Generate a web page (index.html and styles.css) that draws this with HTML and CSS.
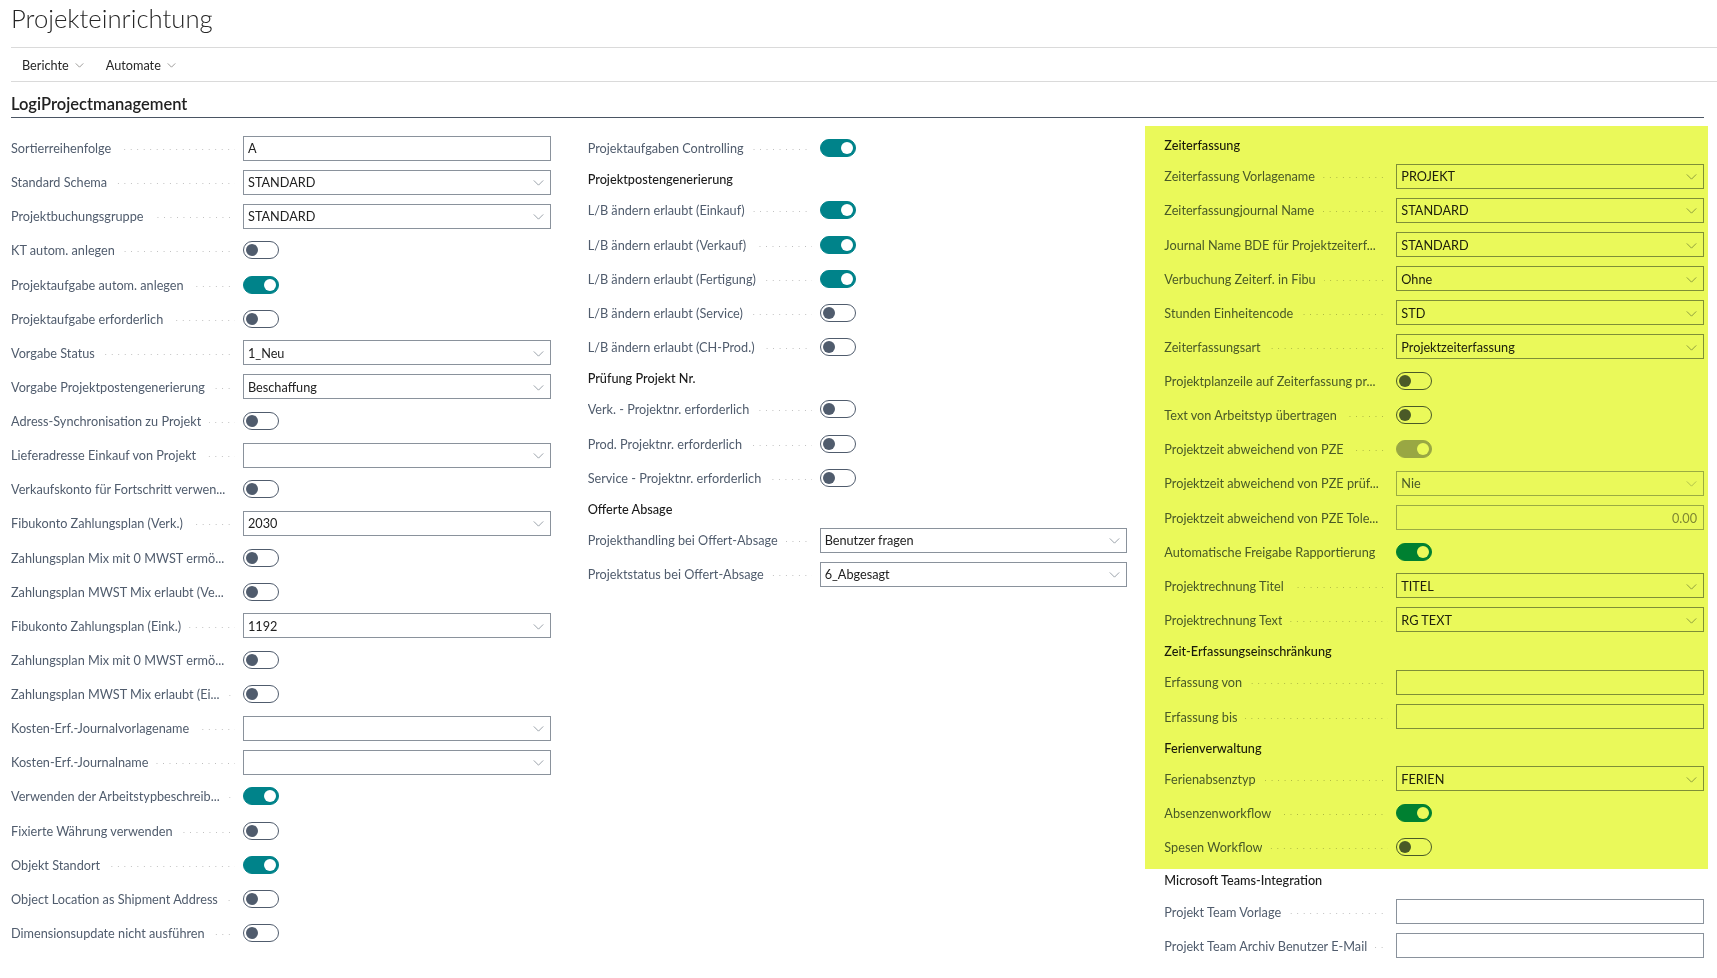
FILE: index.html
```html
<!DOCTYPE html>
<html lang="de">
<head>
    <meta charset="UTF-8">
    <title>Projekteinrichtung</title>
    <link rel="stylesheet" href="styles.css">
</head>
<body>
    <header class="page-head">
        <h1 class="page-title">Projekteinrichtung</h1>
    </header>

    <nav class="action-bar">
        <span class="menu">Berichte <svg class="menu-chev" viewBox="0 0 10 6"><path d="M0.5 0.5 L5 5 L9.5 0.5"/></svg></span>
        <span class="menu">Automate <svg class="menu-chev" viewBox="0 0 10 6"><path d="M0.5 0.5 L5 5 L9.5 0.5"/></svg></span>
    </nav>

    <section class="fasttab">
        <h2 class="fasttab-title">LogiProjectmanagement</h2>

        <div class="columns">
            <!-- Spalte 1 -->
            <div class="col">
                <div class="field"><div class="cap"><span class="caption">Sortierreihenfolge</span><span class="leader"></span></div><div class="val"><div class="input"><span class="text">A</span></div></div></div>
                <div class="field"><div class="cap"><span class="caption">Standard Schema</span><span class="leader"></span></div><div class="val"><div class="input select"><span class="text">STANDARD</span><svg class="chev" viewBox="0 0 12 7"><path d="M0.5 0.5 L6 6 L11.5 0.5"/></svg></div></div></div>
                <div class="field"><div class="cap"><span class="caption">Projektbuchungsgruppe</span><span class="leader"></span></div><div class="val"><div class="input select"><span class="text">STANDARD</span><svg class="chev" viewBox="0 0 12 7"><path d="M0.5 0.5 L6 6 L11.5 0.5"/></svg></div></div></div>
                <div class="field"><div class="cap"><span class="caption">KT autom. anlegen</span><span class="leader"></span></div><div class="val"><span class="toggle"></span></div></div>
                <div class="field"><div class="cap"><span class="caption">Projektaufgabe autom. anlegen</span><span class="leader"></span></div><div class="val"><span class="toggle on"></span></div></div>
                <div class="field"><div class="cap"><span class="caption">Projektaufgabe erforderlich</span><span class="leader"></span></div><div class="val"><span class="toggle"></span></div></div>
                <div class="field"><div class="cap"><span class="caption">Vorgabe Status</span><span class="leader"></span></div><div class="val"><div class="input select"><span class="text">1_Neu</span><svg class="chev" viewBox="0 0 12 7"><path d="M0.5 0.5 L6 6 L11.5 0.5"/></svg></div></div></div>
                <div class="field"><div class="cap"><span class="caption">Vorgabe Projektpostengenerierung</span><span class="leader"></span></div><div class="val"><div class="input select"><span class="text">Beschaffung</span><svg class="chev" viewBox="0 0 12 7"><path d="M0.5 0.5 L6 6 L11.5 0.5"/></svg></div></div></div>
                <div class="field"><div class="cap"><span class="caption">Adress-Synchronisation zu Projekt</span><span class="leader"></span></div><div class="val"><span class="toggle"></span></div></div>
                <div class="field"><div class="cap"><span class="caption">Lieferadresse Einkauf von Projekt</span><span class="leader"></span></div><div class="val"><div class="input select"><span class="text"></span><svg class="chev" viewBox="0 0 12 7"><path d="M0.5 0.5 L6 6 L11.5 0.5"/></svg></div></div></div>
                <div class="field"><div class="cap"><span class="caption">Verkaufskonto für Fortschritt verwen...</span><span class="leader"></span></div><div class="val"><span class="toggle"></span></div></div>
                <div class="field"><div class="cap"><span class="caption">Fibukonto Zahlungsplan (Verk.)</span><span class="leader"></span></div><div class="val"><div class="input select"><span class="text">2030</span><svg class="chev" viewBox="0 0 12 7"><path d="M0.5 0.5 L6 6 L11.5 0.5"/></svg></div></div></div>
                <div class="field"><div class="cap"><span class="caption">Zahlungsplan Mix mit 0 MWST ermö...</span><span class="leader"></span></div><div class="val"><span class="toggle"></span></div></div>
                <div class="field"><div class="cap"><span class="caption">Zahlungsplan MWST Mix erlaubt (Ve...</span><span class="leader"></span></div><div class="val"><span class="toggle"></span></div></div>
                <div class="field"><div class="cap"><span class="caption">Fibukonto Zahlungsplan (Eink.)</span><span class="leader"></span></div><div class="val"><div class="input select"><span class="text">1192</span><svg class="chev" viewBox="0 0 12 7"><path d="M0.5 0.5 L6 6 L11.5 0.5"/></svg></div></div></div>
                <div class="field"><div class="cap"><span class="caption">Zahlungsplan Mix mit 0 MWST ermö...</span><span class="leader"></span></div><div class="val"><span class="toggle"></span></div></div>
                <div class="field"><div class="cap"><span class="caption">Zahlungsplan MWST Mix erlaubt (Ei...</span><span class="leader"></span></div><div class="val"><span class="toggle"></span></div></div>
                <div class="field"><div class="cap"><span class="caption">Kosten-Erf.-Journalvorlagename</span><span class="leader"></span></div><div class="val"><div class="input select"><span class="text"></span><svg class="chev" viewBox="0 0 12 7"><path d="M0.5 0.5 L6 6 L11.5 0.5"/></svg></div></div></div>
                <div class="field"><div class="cap"><span class="caption">Kosten-Erf.-Journalname</span><span class="leader"></span></div><div class="val"><div class="input select"><span class="text"></span><svg class="chev" viewBox="0 0 12 7"><path d="M0.5 0.5 L6 6 L11.5 0.5"/></svg></div></div></div>
                <div class="field"><div class="cap"><span class="caption">Verwenden der Arbeitstypbeschreib...</span><span class="leader"></span></div><div class="val"><span class="toggle on"></span></div></div>
                <div class="field"><div class="cap"><span class="caption">Fixierte Währung verwenden</span><span class="leader"></span></div><div class="val"><span class="toggle"></span></div></div>
                <div class="field"><div class="cap"><span class="caption">Objekt Standort</span><span class="leader"></span></div><div class="val"><span class="toggle on"></span></div></div>
                <div class="field"><div class="cap"><span class="caption">Object Location as Shipment Address</span><span class="leader"></span></div><div class="val"><span class="toggle"></span></div></div>
                <div class="field"><div class="cap"><span class="caption">Dimensionsupdate nicht ausführen</span><span class="leader"></span></div><div class="val"><span class="toggle"></span></div></div>
            </div>

            <!-- Spalte 2 -->
            <div class="col">
                <div class="field"><div class="cap"><span class="caption">Projektaufgaben Controlling</span><span class="leader"></span></div><div class="val"><span class="toggle on"></span></div></div>
                <div class="group-caption">Projektpostengenerierung</div>
                <div class="field"><div class="cap"><span class="caption">L/B ändern erlaubt (Einkauf)</span><span class="leader"></span></div><div class="val"><span class="toggle on"></span></div></div>
                <div class="field"><div class="cap"><span class="caption">L/B ändern erlaubt (Verkauf)</span><span class="leader"></span></div><div class="val"><span class="toggle on"></span></div></div>
                <div class="field"><div class="cap"><span class="caption">L/B ändern erlaubt (Fertigung)</span><span class="leader"></span></div><div class="val"><span class="toggle on"></span></div></div>
                <div class="field"><div class="cap"><span class="caption">L/B ändern erlaubt (Service)</span><span class="leader"></span></div><div class="val"><span class="toggle"></span></div></div>
                <div class="field"><div class="cap"><span class="caption">L/B ändern erlaubt (CH-Prod.)</span><span class="leader"></span></div><div class="val"><span class="toggle"></span></div></div>
                <div class="group-caption">Prüfung Projekt Nr.</div>
                <div class="field"><div class="cap"><span class="caption">Verk. - Projektnr. erforderlich</span><span class="leader"></span></div><div class="val"><span class="toggle"></span></div></div>
                <div class="field"><div class="cap"><span class="caption">Prod. Projektnr. erforderlich</span><span class="leader"></span></div><div class="val"><span class="toggle"></span></div></div>
                <div class="field"><div class="cap"><span class="caption">Service - Projektnr. erforderlich</span><span class="leader"></span></div><div class="val"><span class="toggle"></span></div></div>
                <div class="group-caption">Offerte Absage</div>
                <div class="field"><div class="cap"><span class="caption">Projekthandling bei Offert-Absage</span><span class="leader"></span></div><div class="val"><div class="input select"><span class="text">Benutzer fragen</span><svg class="chev" viewBox="0 0 12 7"><path d="M0.5 0.5 L6 6 L11.5 0.5"/></svg></div></div></div>
                <div class="field"><div class="cap"><span class="caption">Projektstatus bei Offert-Absage</span><span class="leader"></span></div><div class="val"><div class="input select"><span class="text">6_Abgesagt</span><svg class="chev" viewBox="0 0 12 7"><path d="M0.5 0.5 L6 6 L11.5 0.5"/></svg></div></div></div>
            </div>

            <!-- Spalte 3 -->
            <div class="col">
                <div class="highlight">
                    <div class="group-caption">Zeiterfassung</div>
                    <div class="field"><div class="cap"><span class="caption">Zeiterfassung Vorlagename</span><span class="leader"></span></div><div class="val"><div class="input select"><span class="text">PROJEKT</span><svg class="chev" viewBox="0 0 12 7"><path d="M0.5 0.5 L6 6 L11.5 0.5"/></svg></div></div></div>
                    <div class="field"><div class="cap"><span class="caption">Zeiterfassungjournal Name</span><span class="leader"></span></div><div class="val"><div class="input select"><span class="text">STANDARD</span><svg class="chev" viewBox="0 0 12 7"><path d="M0.5 0.5 L6 6 L11.5 0.5"/></svg></div></div></div>
                    <div class="field"><div class="cap"><span class="caption">Journal Name BDE für Projektzeiterf...</span><span class="leader"></span></div><div class="val"><div class="input select"><span class="text">STANDARD</span><svg class="chev" viewBox="0 0 12 7"><path d="M0.5 0.5 L6 6 L11.5 0.5"/></svg></div></div></div>
                    <div class="field"><div class="cap"><span class="caption">Verbuchung Zeiterf. in Fibu</span><span class="leader"></span></div><div class="val"><div class="input select"><span class="text">Ohne</span><svg class="chev" viewBox="0 0 12 7"><path d="M0.5 0.5 L6 6 L11.5 0.5"/></svg></div></div></div>
                    <div class="field"><div class="cap"><span class="caption">Stunden Einheitencode</span><span class="leader"></span></div><div class="val"><div class="input select"><span class="text">STD</span><svg class="chev" viewBox="0 0 12 7"><path d="M0.5 0.5 L6 6 L11.5 0.5"/></svg></div></div></div>
                    <div class="field"><div class="cap"><span class="caption">Zeiterfassungsart</span><span class="leader"></span></div><div class="val"><div class="input select"><span class="text">Projektzeiterfassung</span><svg class="chev" viewBox="0 0 12 7"><path d="M0.5 0.5 L6 6 L11.5 0.5"/></svg></div></div></div>
                    <div class="field"><div class="cap"><span class="caption">Projektplanzeile auf Zeiterfassung pr...</span><span class="leader"></span></div><div class="val"><span class="toggle"></span></div></div>
                    <div class="field"><div class="cap"><span class="caption">Text von Arbeitstyp übertragen</span><span class="leader"></span></div><div class="val"><span class="toggle"></span></div></div>
                    <div class="field"><div class="cap"><span class="caption">Projektzeit abweichend von PZE</span><span class="leader"></span></div><div class="val"><span class="toggle on disabled"></span></div></div>
                    <div class="field"><div class="cap"><span class="caption">Projektzeit abweichend von PZE prüf...</span><span class="leader"></span></div><div class="val"><div class="input select disabled"><span class="text">Nie</span><svg class="chev" viewBox="0 0 12 7"><path d="M0.5 0.5 L6 6 L11.5 0.5"/></svg></div></div></div>
                    <div class="field"><div class="cap"><span class="caption">Projektzeit abweichend von PZE Tole...</span><span class="leader"></span></div><div class="val"><div class="input disabled number"><span class="text">0.00</span></div></div></div>
                    <div class="field"><div class="cap"><span class="caption">Automatische Freigabe Rapportierung</span><span class="leader"></span></div><div class="val"><span class="toggle on"></span></div></div>
                    <div class="field"><div class="cap"><span class="caption">Projektrechnung Titel</span><span class="leader"></span></div><div class="val"><div class="input select"><span class="text">TITEL</span><svg class="chev" viewBox="0 0 12 7"><path d="M0.5 0.5 L6 6 L11.5 0.5"/></svg></div></div></div>
                    <div class="field"><div class="cap"><span class="caption">Projektrechnung Text</span><span class="leader"></span></div><div class="val"><div class="input select"><span class="text">RG TEXT</span><svg class="chev" viewBox="0 0 12 7"><path d="M0.5 0.5 L6 6 L11.5 0.5"/></svg></div></div></div>
                    <div class="group-caption">Zeit-Erfassungseinschränkung</div>
                    <div class="field"><div class="cap"><span class="caption">Erfassung von</span><span class="leader"></span></div><div class="val"><div class="input"><span class="text"></span></div></div></div>
                    <div class="field"><div class="cap"><span class="caption">Erfassung bis</span><span class="leader"></span></div><div class="val"><div class="input"><span class="text"></span></div></div></div>
                    <div class="group-caption">Ferienverwaltung</div>
                    <div class="field"><div class="cap"><span class="caption">Ferienabsenztyp</span><span class="leader"></span></div><div class="val"><div class="input select"><span class="text">FERIEN</span><svg class="chev" viewBox="0 0 12 7"><path d="M0.5 0.5 L6 6 L11.5 0.5"/></svg></div></div></div>
                    <div class="field"><div class="cap"><span class="caption">Absenzenworkflow</span><span class="leader"></span></div><div class="val"><span class="toggle on"></span></div></div>
                    <div class="field"><div class="cap"><span class="caption">Spesen Workflow</span><span class="leader"></span></div><div class="val"><span class="toggle"></span></div></div>
                </div>
                <div class="group-caption">Microsoft Teams-Integration</div>
                <div class="field"><div class="cap"><span class="caption">Projekt Team Vorlage</span><span class="leader"></span></div><div class="val"><div class="input"><span class="text"></span></div></div></div>
                <div class="field"><div class="cap"><span class="caption">Projekt Team Archiv Benutzer E-Mail</span><span class="leader"></span></div><div class="val"><div class="input"><span class="text"></span></div></div></div>
            </div>
        </div>
    </section>
</body>
</html>
```

FILE: styles.css
```css
body {
    margin: 0;
    padding: 0 0 0 11px;
    font-family: Lato, "Open Sans", sans-serif;
    font-size: 12.7px;
    color: #212121;
    background-color: #fff;
}

.page-head {
    padding: 3px 0 14px;
    border-bottom: 1px solid #dadada;
}

.page-title {
    margin: 0;
    font-size: 25.7px;
    font-weight: 300;
    line-height: 30px;
    color: #262626;
}

.action-bar {
    display: flex;
    align-items: center;
    gap: 22px;
    height: 34px;
    padding-left: 11px;
    padding-top: 1px;
    box-sizing: border-box;
    border-bottom: 1px solid #dadada;
}

.menu {
    display: flex;
    align-items: center;
    gap: 6px;
    color: #262626;
}

.menu-chev {
    width: 9px;
    height: 5px;
    fill: none;
    stroke: #8a8886;
    stroke-width: 1;
}

.fasttab {
    margin-right: 13px;
}

.fasttab-title {
    margin: 0;
    padding: 12px 0 3px;
    font-size: 16.5px;
    font-weight: 600;
    line-height: 20px;
    color: #212121;
    border-bottom: 1px solid #4a5563;
}

.columns {
    display: grid;
    grid-template-columns: repeat(3, 1fr);
    column-gap: 37px;
    margin-top: 13px;
}

.field {
    display: flex;
    align-items: center;
    height: 34.13px;
}

.cap {
    flex: 0 0 224px;
    margin-right: 8px;
    display: flex;
    align-items: center;
    min-width: 0;
}

.caption {
    max-width: 218px;
    white-space: nowrap;
    overflow: hidden;
    text-overflow: ellipsis;
    color: #505c6d;
}

.leader {
    flex: 1;
    min-width: 0;
    height: 1px;
    margin: 3px 0 0 8px;
    background-image: linear-gradient(to right, #bdbdbd 1px, transparent 1px);
    background-size: 6.5px 1px;
    background-position: right center;
    background-repeat: repeat-x;
}

.val {
    flex: 1;
    min-width: 0;
    display: flex;
    align-items: center;
}

.input {
    flex: 1;
    height: 25px;
    box-sizing: border-box;
    display: flex;
    align-items: center;
    padding: 0 6px 0 4px;
    border: 1px solid #8a929c;
    background-color: #fff;
    color: #212121;
}

.input .text {
    flex: 1;
    white-space: nowrap;
}

.chev {
    width: 11px;
    height: 6px;
    margin-top: 2px;
    fill: none;
    stroke: #8a929c;
    stroke-width: 1;
}

.input.disabled {
    border-color: #a9b0ba;
    color: #505c6d;
}

.input.disabled .chev {
    stroke: #b6bcc4;
}

.input.number .text {
    text-align: right;
    color: #8a8a8a;
}

.toggle {
    position: relative;
    width: 36px;
    height: 18px;
    box-sizing: border-box;
    border: 1px solid #505c6d;
    border-radius: 9px;
    background-color: #fff;
}

.toggle::after {
    content: "";
    position: absolute;
    top: 2px;
    left: 2px;
    width: 12px;
    height: 12px;
    border-radius: 50%;
    background-color: #505c6d;
}

.toggle.on {
    background-color: #00838a;
    border-color: #00838a;
}

.toggle.on::after {
    left: auto;
    right: 2px;
    background-color: #fff;
}

.toggle.on.disabled {
    background-color: #a7abbd;
    border-color: #a7abbd;
}

.group-caption {
    height: 28.3px;
    display: flex;
    align-items: center;
    font-weight: 500;
    color: #1a1a1a;
}

.highlight {
    position: relative;
    margin-bottom: 2px;
}

/* Textmarker über der Zeiterfassung */
.highlight::after {
    content: "";
    position: absolute;
    top: -5px;
    bottom: -5px;
    left: -19px;
    right: -4px;
    background-color: #eaf95a;
    mix-blend-mode: multiply;
    pointer-events: none;
}
```
